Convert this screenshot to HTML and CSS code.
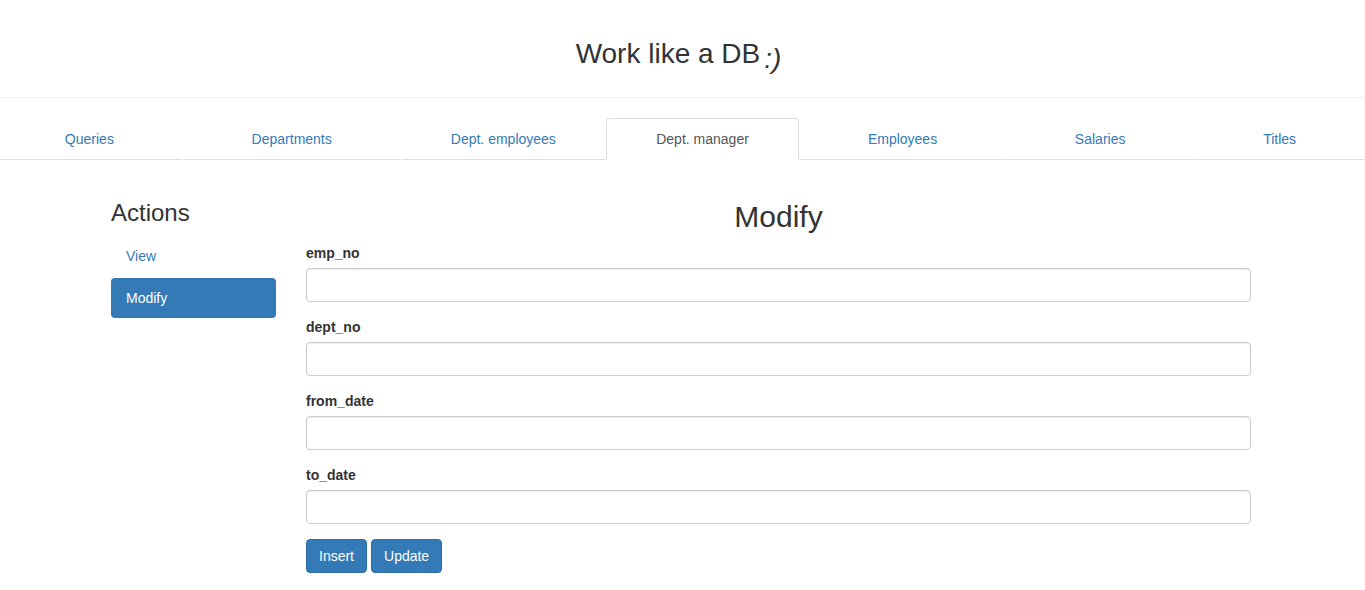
FILE: index.html
```html
<!DOCTYPE html>
<html lang="en">
<head>
<meta charset="utf-8">
<title>Work like a DB</title>
<link rel="stylesheet" href="styles.css">
</head>
<body>
<header class="page-header">
  <h1 class="page-title"><span>Work like a DB</span><em class="smiley">:)</em></h1>
</header>
<nav class="nav">
  <ul class="tabs">
    <li class="tab"><a class="tab-link" href="#queries">Queries</a></li>
    <li class="tab"><a class="tab-link" href="#departments">Departments</a></li>
    <li class="tab"><a class="tab-link" href="#dept-employees">Dept. employees</a></li>
    <li class="tab"><a class="tab-link tab-active" href="#dept-manager">Dept. manager</a></li>
    <li class="tab"><a class="tab-link" href="#employees">Employees</a></li>
    <li class="tab"><a class="tab-link" href="#salaries">Salaries</a></li>
    <li class="tab"><a class="tab-link" href="#titles">Titles</a></li>
  </ul>
</nav>
<main class="content">
  <aside class="actions">
    <h3 class="actions-title">Actions</h3>
    <a class="pill" href="#view">View</a>
    <a class="pill pill-active" href="#modify">Modify</a>
  </aside>
  <form class="form" id="modify">
    <h2 class="form-title">Modify</h2>
    <div class="field"><label class="label" for="emp_no">emp_no</label><input class="input" type="text" id="emp_no"></div>
    <div class="field"><label class="label" for="dept_no">dept_no</label><input class="input" type="text" id="dept_no"></div>
    <div class="field"><label class="label" for="from_date">from_date</label><input class="input" type="text" id="from_date"></div>
    <div class="field"><label class="label" for="to_date">to_date</label><input class="input" type="text" id="to_date"></div>
    <div class="buttons">
      <button class="btn" type="button">Insert</button>
      <button class="btn" type="button">Update</button>
    </div>
  </form>
</main>
</body>
</html>
```
FILE: styles.css
```css
* { box-sizing: border-box; }
body {
  margin: 0;
  font: 14px/20px "Liberation Sans", Arial, sans-serif;
  color: #333;
  background: #fff;
}
a { color: #337ab7; text-decoration: none; }
h1, h2, h3 { margin: 0; font-weight: 500; }
.page-header {
  padding: 38px 8px 23px 0;
  border-bottom: 1px solid #eee;
}
.page-title {
  display: flex;
  justify-content: center;
  gap: 4px;
  font-size: 28px;
  line-height: 31px;
}
.smiley { padding-top: 5px; }
.nav { margin: 20px 0 0 -4px; }
.tabs {
  display: table;
  width: 100%;
  margin: 0;
  padding: 0;
  list-style: none;
}
.tab { display: table-cell; width: 1%; }
.tab-link {
  display: block;
  padding: 10px 15px;
  border: 1px solid transparent;
  border-bottom-color: #ddd;
  border-radius: 4px 4px 0 0;
  text-align: center;
}
.tab-active {
  color: #555;
  border-color: #ddd;
  border-bottom-color: #fff;
}
.content {
  display: grid;
  grid-template-columns: 165px 1fr;
  gap: 30px;
  max-width: 1169px;
  margin: 0 auto;
  padding: 40px 16px 15px 13px;
}
.actions-title { margin-bottom: 10px; font-size: 24px; line-height: 26px; }
.pill {
  display: block;
  margin-bottom: 2px;
  padding: 10px 15px;
  border-radius: 4px;
}
.pill-active { color: #fff; background: #337ab7; }
.form-title {
  margin-bottom: 10px;
  font-size: 30px;
  line-height: 33px;
  text-align: center;
}
.field { margin-bottom: 15px; }
.label { display: block; margin-bottom: 5px; font-weight: 700; }
.input {
  display: block;
  width: 100%;
  height: 34px;
  padding: 6px 12px;
  border: 1px solid #ccc;
  border-radius: 4px;
  font: inherit;
  color: #555;
  background: #fff;
  box-shadow: inset 0 1px 1px rgba(0, 0, 0, 0.075);
}
.buttons { display: flex; gap: 4px; }
.btn {
  padding: 6px 12px;
  border: 1px solid #2e6da4;
  border-radius: 4px;
  font: inherit;
  color: #fff;
  background: #337ab7;
}
```
